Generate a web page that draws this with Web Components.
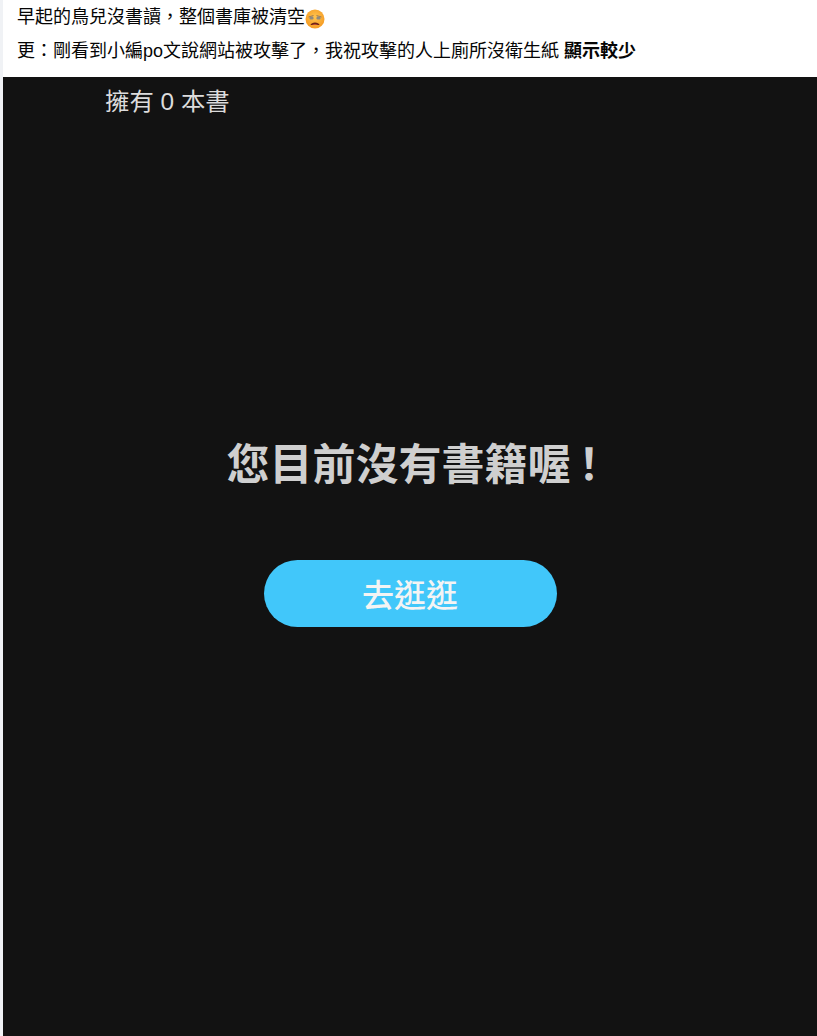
<!DOCTYPE html>
<html lang="zh-Hant"><head><meta charset="utf-8">
<style>
html,body{margin:0;padding:0;background:#f0f2f5;}
body{width:817px;height:1036px;overflow:hidden;}
</style></head><body>
<post-card>
  <post-text>
    <span>早起的鳥兒沒書讀，整個書庫被清空<weary-emoji></weary-emoji></span>
    <span>更：剛看到小編po文說網站被攻擊了，我祝攻擊的人上廁所沒衛生紙 <b>顯示較少</b></span>
  </post-text>
  <library-shot count="擁有 0 本書" message="您目前沒有書籍喔" mark="！" action="去逛逛"></library-shot>
</post-card>
<script>
const F='"Liberation Sans","Noto Sans CJK TC",sans-serif';
class PostCard extends HTMLElement{constructor(){super();this.attachShadow({mode:'open'}).innerHTML=`<style>:host{display:flex;flex-direction:column;margin-left:3px;height:1036px;background:#fff}</style><slot></slot>`}}
class PostText extends HTMLElement{constructor(){super();this.attachShadow({mode:'open'}).innerHTML=`<style>:host{display:flex;flex-direction:column;gap:9px;height:77px;box-sizing:border-box;padding:5px 0 0 14px;font:18px/25px ${F};color:#050505;white-space:nowrap}::slotted(span){display:block}</style><slot></slot>`}}
class WearyEmoji extends HTMLElement{constructor(){super();this.attachShadow({mode:'open'}).innerHTML=`<style>:host{display:inline-block;width:20px;height:20px;vertical-align:-6px;margin-left:0}svg{display:block}</style>
<svg width="20" height="20" viewBox="0 0 20 20"><defs><radialGradient id="g" cx=".5" cy=".4" r=".6"><stop offset="0" stop-color="#ffc44f"/><stop offset="1" stop-color="#f59a22"/></radialGradient></defs>
<circle cx="10" cy="10" r="9.5" fill="url(#g)"/><path d="M3.5 8 8.500 6.500M16.5 8 11.500 6.500" stroke="#a07a50" stroke-width="1" fill="none"/><rect x="4.500" y="7.500" width="4" height="3" rx="1.200" fill="#8f8a80"/><rect x="11.500" y="7.500" width="4" height="3" rx="1.200" fill="#8f8a80"/><path d="M5.500 16C6 12.500 14 12.500 14.500 16Z" fill="#6e2416"/><path d="M7 15.800c1.500-1.200 4.500-1.200 6 0Z" fill="#e05a3c"/></svg>`}}
class LibraryShot extends HTMLElement{constructor(){super();const s=this.attachShadow({mode:'open'});s.innerHTML=`<style>:host{display:flex;flex-direction:column;align-items:center;flex:1;background:#121212;font-family:${F}}
.count{align-self:flex-start;margin:10px 0 0 102px;font-size:24.4px;line-height:30px;color:#dcdcdc;white-space:nowrap}
h1{margin:318px 0 0 17px;font-size:43px;line-height:60px;font-weight:700;color:#cfcfcf;white-space:nowrap}
.mark{margin-left:-3px}
</style><div class="count"></div><h1><span class="msg"></span><span class="mark"></span></h1><pill-button></pill-button>`;
s.querySelector('.count').textContent=this.getAttribute('count');
s.querySelector('.msg').textContent=this.getAttribute('message');
s.querySelector('.mark').textContent=this.getAttribute('mark');
s.querySelector('pill-button').textContent=this.getAttribute('action');}}
class PillButton extends HTMLElement{constructor(){super();this.attachShadow({mode:'open'}).innerHTML=`<style>:host{display:flex;align-items:center;justify-content:center;width:293px;height:67px;box-sizing:border-box;padding-bottom:2px;margin-top:65px;border-radius:33.5px;background:#41c7fa;color:#f4f4f4;font-size:32px;font-weight:500;white-space:nowrap}</style><slot></slot>`}}
customElements.define('post-card',PostCard);
customElements.define('post-text',PostText);
customElements.define('weary-emoji',WearyEmoji);
customElements.define('pill-button',PillButton);
customElements.define('library-shot',LibraryShot);
</script></body></html>
